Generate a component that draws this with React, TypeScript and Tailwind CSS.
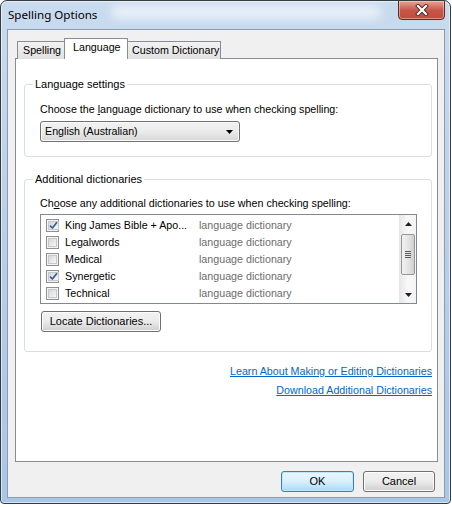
import { ReactNode } from "react";

type Dict = { name: string; checked: boolean };

const dictionaries: Dict[] = [
  { name: "King James Bible + Apo...", checked: true },
  { name: "Legalwords", checked: false },
  { name: "Medical", checked: false },
  { name: "Synergetic", checked: true },
  { name: "Technical", checked: false },
];

// aero-style checkbox
function CheckBox({ checked }: { checked: boolean }) {
  return (
    <span className="flex w-[13px] h-[13px] shrink-0 border border-[#8e8f8f] bg-[#f4f4f4] p-[1px]">
      <span className="flex flex-1 items-center justify-center border border-[#c6c9cc] bg-gradient-to-br from-[#d4d7da] to-[#f7f7f7]">
        {checked && (
          <svg width="9" height="9" viewBox="0 0 9 9" className="overflow-visible">
            <path
              d="M1 4.6 L3.4 7 L8 1.2"
              fill="none"
              stroke="#3c5a9c"
              strokeWidth="1.7"
              strokeLinejoin="round"
            />
          </svg>
        )}
      </span>
    </span>
  );
}

function PushButton({
  children,
  def,
  className,
}: {
  children: ReactNode;
  def?: boolean;
  className?: string;
}) {
  return (
    <button
      className={`h-[21px] rounded-[3px] border text-[11px] text-black leading-none ${
        def
          ? "border-[#3c7fb1] bg-gradient-to-b from-[#eaf6fd] via-[#d9f0fc] to-[#a7d9f5] shadow-[inset_0_0_0_1px_#bfe6f9]"
          : "border-[#707070] bg-gradient-to-b from-[#f2f2f2] via-[#ebebeb] to-[#cfcfcf] shadow-[inset_0_0_0_1px_#fcfcfc]"
      } ${className ?? ""}`}
    >
      {children}
    </button>
  );
}

function GroupBox({
  title,
  children,
  className,
}: {
  title: string;
  children: ReactNode;
  className?: string;
}) {
  return (
    <fieldset
      className={`rounded-[3px] border border-[#d5dfe5] pl-[15px] pr-[10px] ${className ?? ""}`}
    >
      <legend className="ml-[-7px] px-[2px] text-[11px] leading-[14px] text-black">
        {title}
      </legend>
      {children}
    </fieldset>
  );
}

function ScrollBar() {
  return (
    <div className="flex w-[17px] flex-col border-l border-[#e6e6e6] bg-gradient-to-r from-[#e9e9e9] via-[#f8f8f8] to-[#f3f3f3]">
      <div className="flex h-[17px] items-center justify-center">
        <svg width="7" height="4" viewBox="0 0 7 4">
          <path d="M3.5 0 L7 4 L0 4 Z" fill="#202020" />
        </svg>
      </div>
      <div className="mx-[1px] mt-[2px] flex h-[41px] items-center justify-center rounded-[2px] border border-[#979797] bg-gradient-to-r from-[#f1f1f1] via-[#e5e5e5] to-[#cfcfcf]">
        <div className="flex flex-col gap-[1px]">
          <span className="h-px w-[6px] bg-[#5b5b5b]" />
          <span className="h-px w-[6px] bg-[#5b5b5b]" />
          <span className="h-px w-[6px] bg-[#5b5b5b]" />
          <span className="h-px w-[6px] bg-[#5b5b5b]" />
        </div>
      </div>
      <div className="flex-1" />
      <div className="flex h-[17px] items-center justify-center">
        <svg width="7" height="4" viewBox="0 0 7 4">
          <path d="M0 0 L7 0 L3.5 4 Z" fill="#202020" />
        </svg>
      </div>
    </div>
  );
}

export default function App() {
  return (
    <div className="h-[507px] w-[452px] bg-white font-['Liberation_Sans',Arial,sans-serif] text-[10.7px] text-black">
      <div className="flex h-[504px] w-[451px] flex-col overflow-hidden rounded-t-[7px] rounded-b-[4px] border border-[#363b42] bg-gradient-to-b from-[#c9dbee] via-[#b7cfe9] to-[#a8c6e6] shadow-[inset_0_0_0_1px_rgba(255,255,255,0.55)]">
        {/* title bar */}
        <div className="relative flex h-[28px] shrink-0 items-start">
          <div className="absolute left-[110px] top-[4px] h-[14px] w-[270px] rounded-full bg-white/60 blur-[5px]" />
          <span className="relative ml-[7px] mt-[6px] font-['Noto_Sans',sans-serif] text-[11.6px] leading-[16px] text-black">
            Spelling Options
          </span>
          <button className="relative ml-auto mr-[5px] -mt-px flex h-[20px] w-[47px] items-center justify-center rounded-b-[4px] border border-[#5d2a24] bg-gradient-to-b from-[#e8a597] via-[#c7574a] to-[#c24a3a] shadow-[inset_0_0_0_1px_rgba(255,220,210,0.5)]">
            <svg width="14" height="12" viewBox="0 0 14 12">
              <path d="M3 2 L11 10 M11 2 L3 10" stroke="#4a2a26" strokeWidth="4" strokeLinecap="square" />
              <path d="M3 2 L11 10 M11 2 L3 10" stroke="#ffffff" strokeWidth="2.2" strokeLinecap="square" />
            </svg>
          </button>
        </div>

        {/* client area */}
        <div className="ml-[6px] mr-[5px] flex h-[469px] flex-col border border-[#8b9cae] bg-[#f0f0f0]">
          {/* tabs */}
          <div className="relative z-10 ml-[9px] mt-[8px] -mb-px flex h-[21px] items-end whitespace-nowrap">
            <div className="flex h-[18px] w-[48px] items-center border border-b-0 border-[#898c95] bg-gradient-to-b from-[#f2f2f2] to-[#e1e1e1] pl-[5px] pb-px">
              Spelling
            </div>
            <div className="-ml-px flex h-[21px] w-[64px] items-center border border-b-0 border-[#898c95] bg-white pl-[8px] pb-[3px]">
              Language
            </div>
            <div className="flex h-[18px] w-[93px] items-center border border-b-0 border-l-0 border-[#898c95] bg-gradient-to-b from-[#f2f2f2] to-[#e1e1e1] pl-[4px] pb-px">
              Custom Dictionary
            </div>
          </div>

          {/* tab page */}
          <div className="ml-[7px] mr-[6px] flex h-[404px] flex-col border border-[#898c95] bg-white pl-[8px] pr-[5px]">
            <GroupBox title="Language settings" className="mt-[18px] pt-[11px] pb-[14px]">
              <div className="leading-[14px]">
                Choose the <u>l</u>anguage dictionary to use when checking spelling:
              </div>
              <div className="mt-[5px] flex h-[21px] w-[200px] items-center justify-between rounded-[3px] border border-[#707070] bg-gradient-to-b from-[#f2f2f2] via-[#ebebeb] to-[#d7d7d7] pl-[4px] pr-[6px] shadow-[inset_0_0_0_1px_#fbfbfb]">
                <span>English (Australian)</span>
                <svg width="7" height="4" viewBox="0 0 7 4">
                  <path d="M0 0 L7 0 L3.5 4 Z" fill="#000" />
                </svg>
              </div>
            </GroupBox>

            <GroupBox title="Additional dictionaries" className="mt-[15px] pt-[10px] pb-[19px]">
              <div className="leading-[14px]">
                Ch<u>o</u>ose any additional dictionaries to use when checking spelling:
              </div>
              <div className="mt-[4px] flex h-[90px] w-[377px] border border-[#828790] bg-white">
                <div className="flex-1 pt-[2px] pl-[5px]">
                  {dictionaries.map((d) => (
                    <div key={d.name} className="flex h-[17px] items-center">
                      <CheckBox checked={d.checked} />
                      <span className="ml-[6px] w-[134px] whitespace-nowrap">{d.name}</span>
                      <span className="text-[#6d6d6d]">language dictionary</span>
                    </div>
                  ))}
                </div>
                <ScrollBar />
              </div>
              <PushButton className="ml-px mt-[7px] w-[120px]">Locate Dictionaries...</PushButton>
            </GroupBox>

            <div className="mt-[12px] flex flex-col items-end gap-[5px] leading-[14px] text-[#0066cc]">
              <span className="underline">Learn About Making or Editing Dictionaries</span>
              <span className="underline">Download Additional Dictionaries</span>
            </div>
          </div>

          {/* dialog buttons */}
          <div className="mt-[9px] mr-[9px] flex justify-end gap-[9px]">
            <PushButton def className="w-[73px]">
              OK
            </PushButton>
            <PushButton className="w-[72px]">Cancel</PushButton>
          </div>
        </div>
      </div>
    </div>
  );
}
